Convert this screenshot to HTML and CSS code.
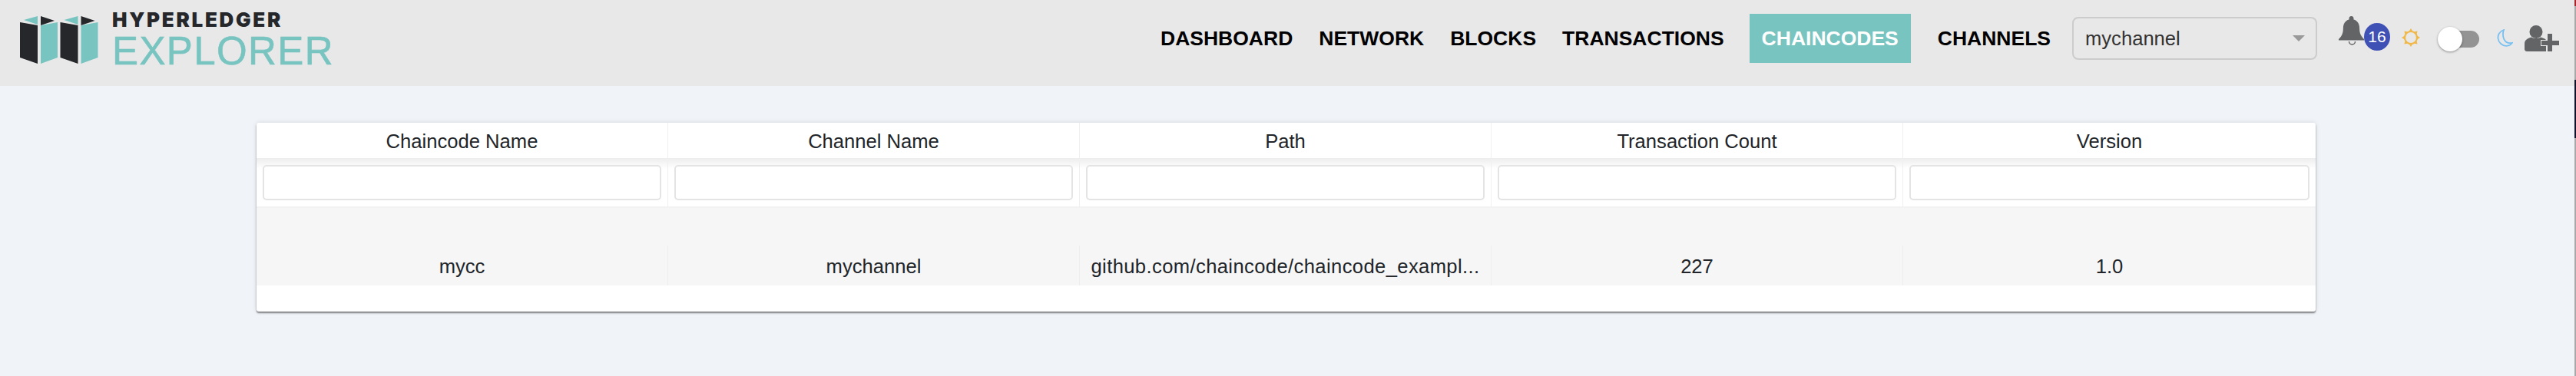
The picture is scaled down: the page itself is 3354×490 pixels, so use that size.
FILE: index.html
```html
<!DOCTYPE html>
<html lang="en">
  <head>
    <meta charset="UTF-8" />
    <meta name="viewport" content="width=device-width, initial-scale=1.0" />
    <title>Hyperledger Explorer</title>
    <link rel="stylesheet" href="styles.css">
  </head>
  <body>
    <header class="topbar">
      <div class="logo">
        <svg class="logoMark" width="128" height="64" viewBox="26 20 128 64">
          <g>
            <polygon fill="#25272a" points="26,29 49,33 49,83 26,75" />
            <polygon fill="#78c4c1" points="53,33 75,29 75,75 53,83" />
            <polygon fill="#78c4c1" points="31,26 49,21 49,32" />
            <polygon fill="#25272a" points="53,21 71,27 53,33" />
          </g>
          <g transform="translate(52.5 0)">
            <polygon fill="#25272a" points="26,29 49,33 49,83 26,75" />
            <polygon fill="#78c4c1" points="53,33 75,29 75,75 53,83" />
            <polygon fill="#78c4c1" points="31,26 49,21 49,32" />
            <polygon fill="#25272a" points="53,21 71,27 53,33" />
          </g>
        </svg>
        <div class="logoText">
          <div class="logoTop">HYPERLEDGER</div>
          <div class="logoBottom">EXPLORER</div>
        </div>
      </div>

      <nav class="nav">
        <a href="#">DASHBOARD</a>
        <a href="#">NETWORK</a>
        <a href="#">BLOCKS</a>
        <a href="#">TRANSACTIONS</a>
        <a href="#" class="active">CHAINCODES</a>
        <a href="#" class="afterActive">CHANNELS</a>
      </nav>

      <div class="channelSelect">
        <span>mychannel</span>
        <i class="caret"></i>
      </div>

      <div class="tools">
        <div class="bellWrap">
          <svg class="bell" width="33" height="38" viewBox="0 0 33 38">
            <path fill="#636466" d="M16.500 0c1.700 0 3 1.300 3 3v1.600c5 1.300 7.600 5.600 7.600 11 0 7 2 10.600 5.900 14.400v1.500H0V30c3.900-3.800 5.900-7.400 5.900-14.400 0-5.400 2.600-9.700 7.600-11V3c0-1.700 1.300-3 3-3z" />
            <path fill="none" stroke="#636466" stroke-width="1.500" d="M13.500 33a4 4 0 0 0 8 0" />
          </svg>
          <span class="badge">16</span>
        </div>

        <svg class="sun" width="24" height="24" viewBox="0 0 24 24">
          <circle cx="12" cy="12" r="8" fill="none" stroke="#f0b849" stroke-width="2.200" />
          <g fill="#f0b849">
            <polygon points="12,0 14.500,4 9.500,4" />
            <polygon points="12,24 14.500,20 9.500,20" />
            <polygon points="0,12 4,9.500 4,14.500" />
            <polygon points="24,12 20,9.500 20,14.500" />
            <polygon points="3.500,3.500 8,4.500 4.500,8" />
            <polygon points="20.500,3.500 19.500,8 16,4.500" />
            <polygon points="3.500,20.500 4.500,16 8,19.500" />
            <polygon points="20.500,20.500 16,19.500 19.500,16" />
          </g>
        </svg>

        <div class="toggle"><span class="thumb"></span></div>

        <svg class="moon" width="21" height="23" viewBox="0 0 21 23">
          <path fill="none" stroke="#79c0f2" stroke-width="1.800" d="M9 1C3 3 1 8 1.500 12c.6 5.500 5.500 10 11 9.800 3.500-.1 6-1.800 7.500-4-5 1-9-1-10.800-5C7.600 9 7.500 5 9 1z" />
        </svg>

        <svg class="userAdd" width="45" height="34" viewBox="0 0 45 34">
          <circle cx="15" cy="8.500" r="8.500" fill="#636466" />
          <path fill="#636466" d="M0 24c0-5 4-7 9-8.500 3 2 9 2 12 0 3 .8 5.500 1.800 7 3.500V34H3c-2 0-3-1.500-3-3z" />
          <path fill="#636466" stroke="#e8e8e8" stroke-width="2" paint-order="stroke" d="M30 11h6v9h9v6h-9v8h-6v-8h-8v-6h8z" />
        </svg>
      </div>
    </header>

    <main class="content">
      <div class="tableCard">
        <div class="row headRow">
          <div class="cell">Chaincode Name</div>
          <div class="cell">Channel Name</div>
          <div class="cell">Path</div>
          <div class="cell">Transaction Count</div>
          <div class="cell">Version</div>
        </div>
        <div class="row filterRow">
          <div class="cell"><input type="text" /></div>
          <div class="cell"><input type="text" /></div>
          <div class="cell"><input type="text" /></div>
          <div class="cell"><input type="text" /></div>
          <div class="cell"><input type="text" /></div>
        </div>
        <div class="bodyRow">
          <div class="row">
            <div class="cell">mycc</div>
            <div class="cell">mychannel</div>
            <div class="cell pathCell">github.com/chaincode/chaincode_exampl...</div>
            <div class="cell">227</div>
            <div class="cell">1.0</div>
          </div>
        </div>
      </div>
    </main>

    <div class="windowEdge"></div>
  </body>
</html>
```

FILE: styles.css
```css
* {
  box-sizing: border-box;
}

html,
body {
  height: 100%;
}

body {
  margin: 0;
  background-color: #f0f3f8;
  font-family: "Liberation Sans", Arial, sans-serif;
  color: #212529;
  overflow: hidden;
}

.windowEdge {
  position: absolute;
  top: 0;
  right: 0;
  bottom: 0;
  width: 2px;
  background: linear-gradient(#a5262a 0 8px, #a8a8a8 8px 104px, #10122a 104px 180px, #a8a8a8 180px);
}

.topbar {
  display: flex;
  align-items: center;
  height: 112px;
  padding-left: 26px;
  padding-bottom: 12px;
  background-color: #e8e8e8;
}

.logo {
  display: flex;
  align-items: flex-start;
  height: 100px;
  padding-top: 8px;
}

.logoMark {
  display: block;
  margin-top: 12px;
}

.logoText {
  margin-left: -8px;
}

.logoTop {
  margin-top: 2px;
  font-family: Inter, sans-serif;
  font-size: 26px;
  font-weight: 900;
  line-height: 32px;
  letter-spacing: 2.7px;
  color: #25272a;
}

.logoBottom {
  margin-top: 1px;
  font-size: 51px;
  line-height: 48px;
  letter-spacing: 1.4px;
  color: #78c4c1;
  -webkit-text-stroke: 0.6px #78c4c1;
}

.nav {
  display: flex;
  align-items: center;
  gap: 2px;
  margin-left: auto;
}

.nav a {
  display: block;
  height: 64px;
  padding: 0 16px;
  font-size: 26.5px;
  font-weight: bold;
  line-height: 64px;
  color: #000;
  text-decoration: none;
}

.nav a.active {
  margin-left: 15px;
  background-color: #78c4c1;
  color: #fff;
}

.nav a.afterActive {
  margin-left: 17px;
}

.channelSelect {
  display: flex;
  align-items: center;
  justify-content: space-between;
  width: 319px;
  height: 56px;
  margin-left: 12px;
  padding: 0 14px 0 15px;
  border: 2px solid #ccc;
  border-radius: 8px;
  font-size: 25.6px;
  color: #333;
}

.caret {
  width: 0;
  height: 0;
  border-left: 8px solid transparent;
  border-right: 8px solid transparent;
  border-top: 8px solid #999;
}

.tools {
  display: flex;
  align-items: center;
  margin-left: 28px;
  margin-right: 22px;
}

.bellWrap {
  display: flex;
  align-items: flex-end;
  height: 46px;
  margin-bottom: 12px;
}

.bell {
  margin-bottom: 8px;
}

.badge {
  display: flex;
  align-items: center;
  justify-content: center;
  width: 34px;
  height: 36px;
  margin-bottom: 1px;
  border-radius: 50%;
  background-color: #3f51b5;
  font-size: 21px;
  color: #fff;
}

.sun {
  margin-left: 15px;
  margin-bottom: 2px;
}

.toggle {
  position: relative;
  width: 42px;
  height: 22px;
  margin-left: 35px;
  margin-top: 2px;
  border-radius: 0 11px 11px 0;
  background-color: #939393;
}

.thumb {
  position: absolute;
  left: -12px;
  top: -5px;
  width: 32px;
  height: 32px;
  border-radius: 50%;
  background-color: #fff;
  box-shadow: 0 1px 3px rgba(0, 0, 0, 0.4);
}

.moon {
  margin-left: 23px;
  margin-bottom: 2px;
}

.userAdd {
  margin-left: 15px;
}

.content {
  padding: 48px 339px 0 334px;
}

.tableCard {
  height: 246px;
  border-radius: 3px;
  background-color: #fff;
  box-shadow: 0 2px 2px rgba(0, 0, 0, 0.45), 0 0 6px rgba(0, 0, 0, 0.12);
}

.row {
  display: grid;
  grid-template-columns: repeat(4, 536px) 1fr;
}

.cell {
  min-width: 0;
  padding: 0 8px;
  border-right: 1px solid #f0f0f0;
  text-align: center;
  font-size: 25.6px;
}

.cell:last-child {
  border-right: 0;
}

.headRow .cell {
  height: 46px;
  line-height: 30px;
  padding-top: 9px;
}

.filterRow {
  height: 65px;
  border-bottom: 2px solid #f2f2f2;
  background: linear-gradient(#ededed, #fff 14px);
}

.filterRow .cell {
  padding: 9px 8px 0;
}

.filterRow input {
  display: block;
  width: 100%;
  height: 46px;
  border: 2px solid #e4e4e4;
  border-radius: 5px;
  background-color: #fff;
}

.bodyRow {
  display: flex;
  align-items: flex-end;
  height: 101px;
  background-color: #f6f6f6;
}

.bodyRow .row {
  width: 100%;
}

.bodyRow .cell {
  height: 52px;
  padding-top: 12px;
  line-height: 30px;
  white-space: nowrap;
  border-right-color: #eeeeee;
}

.bodyRow .pathCell {
  letter-spacing: 0.38px;
}
```
